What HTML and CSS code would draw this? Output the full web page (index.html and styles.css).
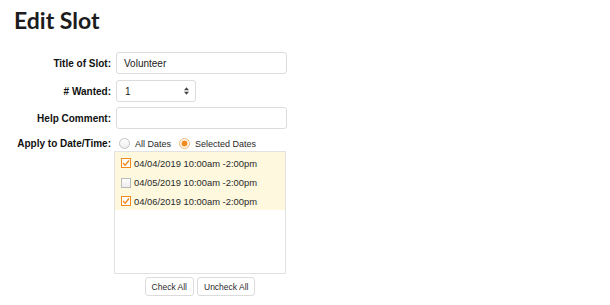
FILE: index.html
```html
<!DOCTYPE html>
<html>
<head>
<meta charset="utf-8">
<link rel="stylesheet" href="styles.css">
</head>
<body>
<h1 class="title">Edit Slot</h1>
<div class="form">
  <div class="row first">
    <label class="lbl">Title of Slot:</label>
    <div class="field"><input class="text" type="text" value="Volunteer"></div>
  </div>
  <div class="row">
    <label class="lbl"># Wanted:</label>
    <div class="field">
      <div class="select"><span>1</span>
        <svg class="arrows" width="5" height="8" viewBox="0 0 5 8"><path d="M0 3.2 L2.5 0.3 L5 3.2 Z M0 4.8 L2.5 7.7 L5 4.8 Z" fill="#444"/></svg>
      </div>
    </div>
  </div>
  <div class="row">
    <label class="lbl">Help Comment:</label>
    <div class="field"><input class="text" type="text" value=""></div>
  </div>
  <div class="row apply">
    <label class="lbl">Apply to Date/Time:</label>
    <div class="field radios">
      <span class="radio"></span><span class="rtext">All Dates</span>
      <span class="radio on"></span><span class="rtext">Selected Dates</span>
    </div>
  </div>
  <div class="row listrow">
    <div class="lbl"></div>
    <div class="listcol">
      <div class="list">
        <div class="item"><span class="cb on"><svg width="8" height="8" viewBox="0 0 8 8"><path d="M1 4 L3.2 6.2 L7 1.5" fill="none" stroke="#f28a1f" stroke-width="1.4"/></svg></span>04/04/2019 10:00am -2:00pm</div>
        <div class="item"><span class="cb"></span>04/05/2019 10:00am -2:00pm</div>
        <div class="item"><span class="cb on"><svg width="8" height="8" viewBox="0 0 8 8"><path d="M1 4 L3.2 6.2 L7 1.5" fill="none" stroke="#f28a1f" stroke-width="1.4"/></svg></span>04/06/2019 10:00am -2:00pm</div>
      </div>
      <div class="buttons">
        <button class="btn">Check All</button>
        <button class="btn">Uncheck All</button>
      </div>
    </div>
  </div>
</div>
</body>
</html>
```

FILE: styles.css
```css
body {
  margin: 0;
  background: #fff;
  font-family: "Liberation Sans", Arial, sans-serif;
  color: #222;
}
.title {
  font-family: Lato, sans-serif;
  font-weight: 700;
  font-size: 23px;
  margin: 0;
  padding: 6px 0 0 14px;
  color: #1c1c1c;
  line-height: 28px;
}
.form {
  padding-top: 18px;
}
.row {
  display: flex;
  align-items: center;
  margin-bottom: 5px;
}
.row.first {
  margin-bottom: 6px;
}
.lbl {
  width: 111px;
  text-align: right;
  font-weight: bold;
  font-size: 10px;
  color: #111;
  flex: none;
}
.field {
  margin-left: 5px;
}
.text {
  box-sizing: border-box;
  display: block;
  width: 171px;
  height: 22px;
  border: 1px solid #dcdcdc;
  border-radius: 3px;
  padding: 0 7px;
  font-family: "Liberation Sans", Arial, sans-serif;
  font-size: 10px;
  color: #1a1a1a;
  outline: none;
}
.select {
  box-sizing: border-box;
  width: 80px;
  height: 22px;
  border: 1px solid #dcdcdc;
  border-radius: 3px;
  padding: 0 6px 0 8px;
  font-size: 10px;
  color: #1a1a1a;
  display: flex;
  align-items: center;
  justify-content: space-between;
}
.apply {
  margin-top: 9px;
  margin-bottom: 2px;
}
.radios {
  display: flex;
  align-items: center;
  font-size: 9px;
  color: #2a2a2a;
  margin-left: 8px;
}
.radio {
  box-sizing: border-box;
  width: 11px;
  height: 11px;
  border-radius: 50%;
  border: 1px solid #c4c4c4;
  background: linear-gradient(#fff, #ececec);
  margin-right: 5px;
}
.radio.on {
  border: 1px solid #f7b26a;
  background: radial-gradient(circle, #f28a1f 0 2.6px, #fde7cf 3.2px, #fff 4px);
}
.rtext {
  margin-right: 8px;
}
.listrow {
  align-items: flex-start;
}
.listcol {
  margin-left: 3px;
  display: flex;
  flex-direction: column;
  align-items: center;
}
.list {
  box-sizing: border-box;
  width: 172px;
  height: 123px;
  border: 1px solid #e2e2e2;
  background: #fff;
}
.item {
  background: #fdf8de;
  height: 19px;
  display: flex;
  align-items: center;
  font-size: 9.4px;
  color: #2a2a2a;
  padding-left: 6px;
}
.item:first-child {
  height: 20px;
  padding-top: 1px;
}
.item:last-child {
  height: 18px;
  padding-bottom: 0;
}
.cb {
  box-sizing: border-box;
  width: 10px;
  height: 10px;
  border: 1px solid #bbb;
  background: linear-gradient(#fff, #ececec);
  margin-right: 3px;
  display: inline-flex;
  align-items: center;
  justify-content: center;
}
.cb.on {
  border-color: #f28a1f;
  background: #fff;
}
.buttons {
  display: flex;
  gap: 3px;
  margin-top: 3px;
}
.btn {
  box-sizing: border-box;
  height: 19px;
  border: 1px solid #dcdcdc;
  border-radius: 3px;
  background: #fff;
  font-family: "Liberation Sans", Arial, sans-serif;
  font-size: 8.5px;
  color: #2a2a2a;
  padding: 0 6px;
}
```
